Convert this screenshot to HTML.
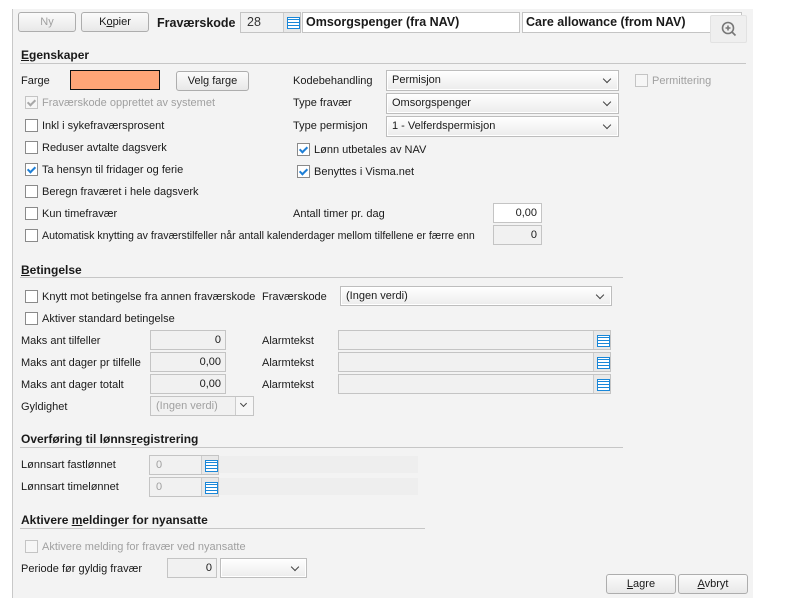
<!DOCTYPE html>
<html><head><meta charset="utf-8"><style>
*{box-sizing:border-box;margin:0;padding:0}
body{width:790px;height:611px;background:#fff;font-family:"Liberation Sans",Arial,sans-serif;font-size:11px;color:#1a1a1a;position:relative;overflow:hidden}
#p{position:absolute;left:12px;top:9px;width:741px;height:589px;background:#f3f3f3;border-left:1px solid #c8c8c8}
.a{position:absolute;white-space:nowrap}
.t{position:absolute;white-space:nowrap;line-height:13px;margin-top:1px}
.btn{position:absolute;border:1px solid #adadad;border-radius:3px;background:linear-gradient(#fbfbfb,#e8e8e8);text-align:center;font-size:11px;line-height:18px}
.h{position:absolute;font-weight:bold;font-size:12px;white-space:nowrap;line-height:14px;margin-top:1px}
.ln{position:absolute;height:1px;background:#c6c6c6}
.cb{position:absolute;width:13px;height:13px;border:1px solid #8a8a8a;background:#fff}
.cb.d{border-color:#c4c4c4;background:#f6f6f6}
.ck::after{content:"";position:absolute;left:3px;top:1px;width:3px;height:6px;border:solid #1e7fd6;border-width:0 2px 2px 0;transform:rotate(45deg)}
.cb.d.ck::after{border-color:#a8a8a8}
.sel{position:absolute;border:1px solid #bdbdbd;background:linear-gradient(#fff,#ececec);padding-left:5px;line-height:19px;box-shadow:inset 0 0 0 1px #fff}
.sel::after{content:"";position:absolute;right:8px;top:5px;width:5px;height:5px;border:solid #444;border-width:0 1px 1px 0;transform:rotate(45deg)}
.in{position:absolute;border:1px solid #c4c4c4;background:#f1f1f1;text-align:right;padding-right:4px;line-height:18px}
.ic{position:absolute;width:17px;background:#e8e8e8;border-left:1px solid #ccc}
.ic::after{content:"";position:absolute;left:3px;top:4px;width:11px;height:10px;border:1px solid #1a87d8;background:repeating-linear-gradient(#fff 0 1px,#1a87d8 1px 2px,#fff 2px 3px)}
.g{color:#a0a0a0}
u{text-decoration:underline}
</style></head><body>
<div id="p"></div>
<div class="btn g" style="left:18px;top:12px;width:58px;height:20px">Ny</div>
<div class="btn" style="left:81px;top:12px;width:68px;height:20px">K<u>o</u>pier</div>
<div class="h" style="left:157px;top:15px;font-size:12.5px">Fraværskode</div>
<div class="in" style="left:240px;top:12px;width:61px;height:21px;text-align:left;padding-left:6px;font-size:12.5px;line-height:19px;color:#333;background:#f1f1f1">28<span class="ic" style="left:42px;top:0;height:19px"></span></div>
<div class="in" style="left:302px;top:12px;width:218px;height:21px;text-align:left;padding-left:3px;background:#fff;font-weight:bold;font-size:12.5px;line-height:19px">Omsorgspenger (fra NAV)</div>
<div class="in" style="left:522px;top:12px;width:220px;height:21px;text-align:left;padding-left:3px;background:#fff;font-weight:bold;font-size:12.5px;line-height:19px">Care allowance (from NAV)</div>
<div class="a" style="left:710px;top:15px;width:37px;height:28px;border:1px solid #e2e2e2;background:#efefef;border-radius:2px">
<svg width="37" height="28" style="position:absolute;left:0;top:0"><circle cx="17" cy="12" r="5.5" fill="none" stroke="#777" stroke-width="1.6"/><path d="M14.5 12h5M17 9.5v5M21 16l3.5 3.5" stroke="#777" stroke-width="1.6"/></svg></div>

<div class="h" style="left:21px;top:47px"><u>E</u>genskaper</div>
<div class="ln" style="left:20px;top:63px;width:726px"></div>
<div class="t" style="left:21px;top:74px">Farge</div>
<div class="a" style="left:70px;top:70px;width:90px;height:20px;background:#ffa577;border:1px solid #111"></div>
<div class="btn" style="left:176px;top:71px;width:73px;height:20px">Vel<u>g</u> farge</div>
<div class="t" style="left:293px;top:74px">Kodebehandling</div>
<div class="sel" style="left:386px;top:70px;width:233px;height:21px">Permisjon</div>
<div class="cb d" style="left:635px;top:74px"></div><div class="t g" style="left:652px;top:74px">Permittering</div>

<div class="cb d ck" style="left:25px;top:96px"></div><div class="t g" style="left:42px;top:96px">Fraværskode opprettet av systemet</div>
<div class="t" style="left:293px;top:96px">Type fravær</div>
<div class="sel" style="left:386px;top:93px;width:233px;height:21px">Omsorgspenger</div>
<div class="cb" style="left:25px;top:119px"></div><div class="t" style="left:42px;top:119px">Inkl i sykefraværsprosent</div>
<div class="t" style="left:293px;top:119px">Type permisjon</div>
<div class="sel" style="left:386px;top:116px;width:233px;height:21px">1 - Velferdspermisjon</div>
<div class="cb" style="left:25px;top:141px"></div><div class="t" style="left:42px;top:141px">Reduser avtalte dagsverk</div>
<div class="cb ck" style="left:297px;top:143px"></div><div class="t" style="left:314px;top:143px">Lønn utbetales av NAV</div>
<div class="cb ck" style="left:25px;top:163px"></div><div class="t" style="left:42px;top:163px">Ta hensyn til fridager og ferie</div>
<div class="cb ck" style="left:297px;top:165px"></div><div class="t" style="left:314px;top:165px">Benyttes i Visma.net</div>
<div class="cb" style="left:25px;top:185px"></div><div class="t" style="left:42px;top:185px">Beregn fraværet i hele dagsverk</div>
<div class="cb" style="left:25px;top:207px"></div><div class="t" style="left:42px;top:207px">Kun timefravær</div>
<div class="t" style="left:293px;top:207px">Antall timer pr. dag</div>
<div class="in" style="left:493px;top:203px;width:49px;height:20px;background:#fff">0,00</div>
<div class="cb" style="left:25px;top:229px"></div><div class="t" style="left:42px;top:229px;font-size:10.6px">Automatisk knytting av fraværstilfeller når antall kalenderdager mellom tilfellene er færre enn</div>
<div class="in" style="left:493px;top:225px;width:49px;height:20px">0</div>

<div class="h" style="left:21px;top:262px"><u>B</u>etingelse</div>
<div class="ln" style="left:20px;top:277px;width:603px"></div>
<div class="cb" style="left:25px;top:290px"></div><div class="t" style="left:42px;top:290px">Knytt mot betingelse fra annen fraværskode</div>
<div class="t" style="left:262px;top:290px">Fraværskode</div>
<div class="sel" style="left:340px;top:286px;width:272px;height:20px;line-height:18px">(Ingen verdi)</div>
<div class="cb" style="left:25px;top:312px"></div><div class="t" style="left:42px;top:312px">Aktiver standard betingelse</div>
<div class="t" style="left:21px;top:334px">Maks ant tilfeller</div>
<div class="in" style="left:150px;top:330px;width:76px;height:20px">0</div>
<div class="t" style="left:21px;top:356px">Maks ant dager pr tilfelle</div>
<div class="in" style="left:150px;top:352px;width:76px;height:20px">0,00</div>
<div class="t" style="left:21px;top:378px">Maks ant dager totalt</div>
<div class="in" style="left:150px;top:374px;width:76px;height:20px">0,00</div>
<div class="t" style="left:262px;top:334px">Alarmtekst</div>
<div class="in" style="left:338px;top:330px;width:273px;height:20px"><span class="ic" style="right:0;top:0;height:18px"></span></div>
<div class="t" style="left:262px;top:356px">Alarmtekst</div>
<div class="in" style="left:338px;top:352px;width:273px;height:20px"><span class="ic" style="right:0;top:0;height:18px"></span></div>
<div class="t" style="left:262px;top:378px">Alarmtekst</div>
<div class="in" style="left:338px;top:374px;width:273px;height:20px"><span class="ic" style="right:0;top:0;height:18px"></span></div>
<div class="t" style="left:21px;top:400px">Gyldighet</div>
<div class="in g" style="left:150px;top:396px;width:104px;height:20px;text-align:left;padding-left:5px">(Ingen verdi)<span style="position:absolute;right:0;top:0;width:18px;height:18px;border-left:1px solid #ccc;background:#f6f6f6"></span><span style="position:absolute;right:7px;top:4px;width:5px;height:5px;border:solid #444;border-width:0 1px 1px 0;transform:rotate(45deg)"></span></div>

<div class="h" style="left:21px;top:431px">Overføring til lønns<u>r</u>egistrering</div>
<div class="ln" style="left:20px;top:447px;width:603px"></div>
<div class="a" style="left:218px;top:456px;width:200px;height:17px;background:#eeeeee"></div>
<div class="a" style="left:218px;top:478px;width:200px;height:17px;background:#eeeeee"></div>
<div class="t" style="left:21px;top:458px">Lønnsart fastlønnet</div>
<div class="in g" style="left:149px;top:455px;width:70px;height:20px;text-align:left;padding-left:6px">0<span class="ic" style="right:0;top:0;height:18px"></span></div>
<div class="t" style="left:21px;top:480px">Lønnsart timelønnet</div>
<div class="in g" style="left:149px;top:477px;width:70px;height:20px;text-align:left;padding-left:6px">0<span class="ic" style="right:0;top:0;height:18px"></span></div>

<div class="h" style="left:21px;top:512px">Aktivere <u>m</u>eldinger for nyansatte</div>
<div class="ln" style="left:20px;top:528px;width:405px"></div>
<div class="cb d" style="left:25px;top:540px"></div><div class="t g" style="left:42px;top:540px">Aktivere melding for fravær ved nyansatte</div>
<div class="t" style="left:21px;top:562px">Periode før gyldig fravær</div>
<div class="in" style="left:167px;top:558px;width:50px;height:20px">0</div>
<div class="sel" style="left:220px;top:558px;width:87px;height:20px"></div>

<div class="btn" style="left:606px;top:574px;width:70px;height:20px"><u>L</u>agre</div>
<div class="btn" style="left:678px;top:574px;width:70px;height:20px"><u>A</u>vbryt</div>
</body></html>
